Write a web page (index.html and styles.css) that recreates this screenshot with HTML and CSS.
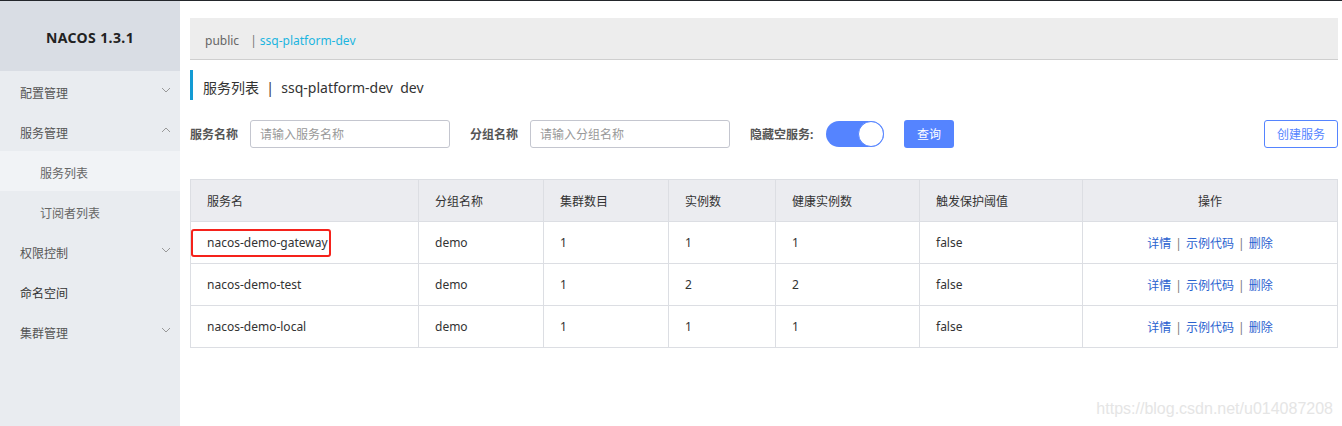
FILE: index.html
```html
<!DOCTYPE html>
<html lang="zh-CN">
<head>
<meta charset="utf-8">
<title>Nacos</title>
<link rel="stylesheet" href="styles.css">
</head>
<body>
<div class="topline"></div>
<div class="app">
  <aside class="sidebar">
    <div class="brand">NACOS 1.3.1</div>
    <ul class="menu">
      <li class="item group"><span>配置管理</span><svg class="chev" viewBox="0 0 10 6" width="10" height="6"><polyline points="1,1 5,5 9,1"/></svg></li>
      <li class="item group"><span>服务管理</span><svg class="chev" viewBox="0 0 10 6" width="10" height="6"><polyline points="1,5 5,1 9,5"/></svg></li>
      <li class="item sub active"><span>服务列表</span></li>
      <li class="item sub"><span>订阅者列表</span></li>
      <li class="item group"><span>权限控制</span><svg class="chev" viewBox="0 0 10 6" width="10" height="6"><polyline points="1,1 5,5 9,1"/></svg></li>
      <li class="item leaf"><span>命名空间</span></li>
      <li class="item group"><span>集群管理</span><svg class="chev" viewBox="0 0 10 6" width="10" height="6"><polyline points="1,1 5,5 9,1"/></svg></li>
    </ul>
  </aside>
  <main class="main">
    <div class="crumbs">
      <span class="ns">public</span>
      <span class="sep">|</span>
      <span class="ns current">ssq-platform-dev</span>
    </div>
    <h1 class="title">服务列表&nbsp; | &nbsp;ssq-platform-dev&nbsp;&nbsp;dev</h1>
    <div class="filters">
      <label class="flabel">服务名称</label>
      <input class="finput" type="text" placeholder="请输入服务名称">
      <label class="flabel">分组名称</label>
      <input class="finput" type="text" placeholder="请输入分组名称">
      <label class="flabel wide">隐藏空服务:</label>
      <span class="switch"><span class="knob"></span></span>
      <button class="btn primary">查询</button>
      <button class="btn outline">创建服务</button>
    </div>
    <table class="grid">
      <colgroup>
        <col style="width:228px"><col style="width:125px"><col style="width:125px"><col style="width:107px"><col style="width:144px"><col style="width:163px"><col>
      </colgroup>
      <thead>
        <tr><th>服务名</th><th>分组名称</th><th>集群数目</th><th>实例数</th><th>健康实例数</th><th>触发保护阈值</th><th class="center">操作</th></tr>
      </thead>
      <tbody>
        <tr><td class="hl"><span class="mark"></span>nacos-demo-gateway</td><td>demo</td><td>1</td><td>1</td><td>1</td><td>false</td><td class="center"><a>详情</a><span class="bar">|</span><a>示例代码</a><span class="bar">|</span><a>删除</a></td></tr>
        <tr><td>nacos-demo-test</td><td>demo</td><td>1</td><td>2</td><td>2</td><td>false</td><td class="center"><a>详情</a><span class="bar">|</span><a>示例代码</a><span class="bar">|</span><a>删除</a></td></tr>
        <tr><td>nacos-demo-local</td><td>demo</td><td>1</td><td>1</td><td>1</td><td>false</td><td class="center"><a>详情</a><span class="bar">|</span><a>示例代码</a><span class="bar">|</span><a>删除</a></td></tr>
      </tbody>
    </table>
  </main>
</div>
<div class="watermark">https://blog.csdn.net/u014087208</div>
</body>
</html>
```
FILE: styles.css
```css
* { box-sizing: border-box; }
html, body { margin: 0; padding: 0; }
body {
  font-family: "Noto Sans", "Noto Sans CJK SC", sans-serif;
  font-size: 12px;
  color: #333;
  background: #fff;
  height: 426px;
  overflow: hidden;
  position: relative;
}
.topline { height: 1px; background: #23262b; }
.app { display: flex; height: 425px; }
.sidebar { width: 180px; flex: none; background: #e9ecf0; }
.brand {
  height: 70px;
  background: #d9dde4;
  display: flex; align-items: center; justify-content: center;
  font-weight: bold; font-size: 14px; color: #222;
  letter-spacing: 0.4px;
  padding-top: 2px;
}
.menu { list-style: none; margin: 0; padding: 0; }
.item {
  height: 40px;
  display: flex; align-items: center; justify-content: space-between;
  padding: 4px 9px 0 20px;
  color: #555; font-size: 12px;
}
.item.sub { padding-left: 40px; color: #666; }
.item.active { background: #f1f3f6; }
.item.leaf { color: #333; }
.chev { fill: none; stroke: #999; stroke-width: 1; margin-top: -6px; }
.main { flex: 1; padding: 17px 4px 0 10px; min-width: 0; }
.crumbs {
  height: 42px;
  background: #ededed;
  border-bottom: 1px solid #cfcfcf;
  display: flex; align-items: center;
  padding: 4px 0 0 15px;
  font-size: 12px; color: #666;
}
.crumbs .sep { margin-left: 11px; margin-right: 3px; color: #777; }
.crumbs .current { color: #1cb5e0; }
.title {
  margin: 10px 0 0 0;
  height: 30px;
  border-left: 3px solid #139bd4;
  padding: 4px 0 0 10px;
  display: flex; align-items: center;
  font-size: 14px; font-weight: normal; color: #333;
}
.filters {
  margin-top: 20px;
  display: flex; align-items: center;
  height: 28px;
}
.flabel { font-weight: bold; color: #555; font-size: 12px; width: 48px; margin-right: 12px; white-space: nowrap; }
.flabel.wide { width: 66px; margin-right: 10px; }
.finput {
  width: 200px; height: 28px;
  border: 1px solid #c4c6cf; border-radius: 3px;
  padding: 0 9px;
  font-family: inherit; font-size: 12px; color: #333;
  margin-right: 20px;
  outline: none;
}
.finput::placeholder { color: #999; }
.switch {
  width: 58px; height: 26px;
  border-radius: 13px;
  background: #5584ff;
  position: relative;
  margin-right: 20px;
}
.knob {
  position: absolute; right: 0; top: 0;
  width: 26px; height: 26px;
  border-radius: 50%;
  background: #fff;
  border: 1px solid #5584ff;
}
.btn {
  height: 28px; border-radius: 3px;
  font-family: inherit; font-size: 12px;
  cursor: pointer;
}
.btn.primary { width: 50px; background: #5584ff; color: #fff; border: none; }
.btn.outline { margin-left: auto; width: 74px; background: #fff; color: #5584ff; border: 1px solid #5584ff; }
.grid {
  margin-top: 31px;
  width: 1148px;
  border-collapse: collapse;
  table-layout: fixed;
}
.grid th, .grid td {
  border: 1px solid #dcdee3;
  height: 42px;
  padding: 0 16px;
  text-align: left;
  font-size: 12px;
  color: #333;
  white-space: nowrap;
}
.grid th { background: #ebecf0; font-weight: normal; }
.grid .center { text-align: center; }
.grid td.hl { position: relative; }
.mark {
  position: absolute; left: 0; top: 7px;
  width: 140px; height: 28px;
  border: 2px solid #f5221b; border-radius: 3px;
}
.grid a { color: #2a62cf; }
.grid .bar { color: #7a7a7a; margin: 0 4px; }
.watermark {
  position: absolute; right: 9px; bottom: 8px;
  font-family: "Liberation Sans", sans-serif;
  font-size: 16px; color: #e5e5e5;
}
```
